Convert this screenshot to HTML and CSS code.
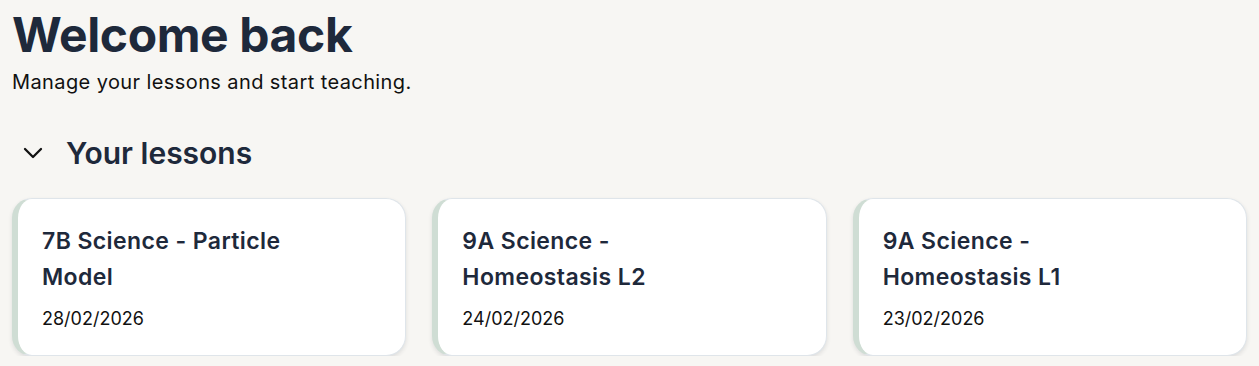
FILE: index.html
```html
<!DOCTYPE html>
<html lang="en">
<head>
<meta charset="utf-8">
<title>Welcome back</title>
<link rel="stylesheet" href="styles.css">
</head>
<body>
<main class="page">
  <header class="intro">
    <h1 class="title">Welcome back</h1>
    <p class="subtitle">Manage your lessons and start teaching.</p>
  </header>
  <section class="lessons">
    <button class="section-toggle" type="button">
      <svg class="chevron" viewBox="0 0 20 12" width="20" height="12" aria-hidden="true"><path d="M2 2l8 8 8-8" fill="none" stroke="currentColor" stroke-width="2.3" stroke-linecap="round" stroke-linejoin="round"/></svg>
      <span class="section-title">Your lessons</span>
    </button>
    <div class="cards">
      <article class="card">
        <h3 class="card-title">7B Science - Particle Model</h3>
        <p class="card-date">28/02/2026</p>
      </article>
      <article class="card">
        <h3 class="card-title">9A Science - Homeostasis L2</h3>
        <p class="card-date">24/02/2026</p>
      </article>
      <article class="card">
        <h3 class="card-title">9A Science - Homeostasis L1</h3>
        <p class="card-date">23/02/2026</p>
      </article>
    </div>
  </section>
</main>
</body>
</html>
```

FILE: styles.css
```css
html, body {
  margin: 0;
  padding: 0;
  background: #f7f6f3;
}
body {
  font-family: Inter, "Noto Sans", sans-serif;
  color: #1f2937;
}
.page {
  padding: 6px 12px 0 12px;
}
.title {
  margin: 0;
  font-size: 48px;
  line-height: 58px;
  font-weight: 700;
  color: #1e293b;
  letter-spacing: -0.4px;
}
.subtitle {
  margin: 6px 0 0 0;
  font-size: 20px;
  line-height: 24px;
  letter-spacing: 0.4px;
  color: #111111;
}
.lessons {
  margin-top: 41px;
}
.section-toggle {
  display: flex;
  align-items: center;
  gap: 23px;
  background: none;
  border: 0;
  padding: 0 0 0 11px;
  font: inherit;
  color: #1e293b;
  cursor: pointer;
}
.chevron {
  color: #111;
  display: block;
}
.section-title {
  font-size: 30px;
  line-height: 36px;
  font-weight: 600;
}
.cards {
  margin-top: 27px;
  display: grid;
  grid-template-columns: repeat(3, 1fr);
  gap: 26px;
}
.card {
  background: #ffffff;
  border: 1px solid #dfe5ea;
  border-left: 6px solid #cfddd4;
  border-radius: 20px;
  box-shadow: 0 2px 4px rgba(30, 41, 59, 0.12);
  padding: 24px 24px 24px 24px;
  height: 158px;
  box-sizing: border-box;
}
.card-title {
  margin: 0;
  font-size: 23px;
  line-height: 36px;
  font-weight: 600;
  letter-spacing: 0.4px;
  color: #1e293b;
  max-width: 260px;
}
.card-date {
  margin: 12px 0 0 0;
  font-size: 18px;
  line-height: 24px;
  color: #111111;
}
```
